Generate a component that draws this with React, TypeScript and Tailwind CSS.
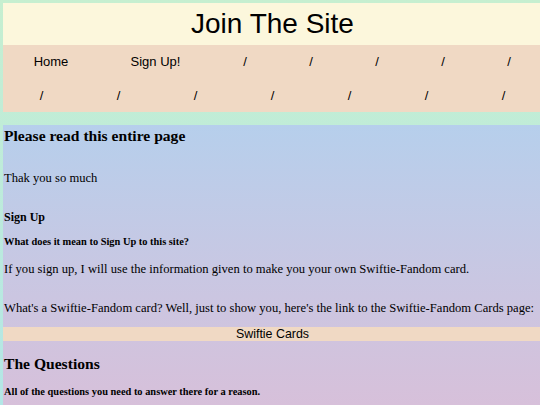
import React from "react";

const serif = { fontFamily: '"Liberation Serif", "Times New Roman", serif' };
const sans = { fontFamily: '"Liberation Sans", Arial, sans-serif' };

export default function App() {
  const row1: [string, number][] = [
    ["Home", 96],
    ["Sign Up!", 113],
    ["/", 66],
    ["/", 66],
    ["/", 66],
    ["/", 66],
    ["/", 66],
  ];
  return (
    <div className="min-h-[405px] w-[540px] overflow-hidden bg-gradient-to-b from-[#c6efd0] to-[#b3e6e6] pl-[3px] pt-[3px]">
      <div className="w-[539px]">
        <div
          className="flex h-[42px] items-center justify-center bg-[#fcf7dc] text-[28px] text-black"
          style={sans}
        >
          Join The Site
        </div>
        <div className="h-[67px] bg-[#f0d9c4] text-[13px] text-black" style={sans}>
          <div className="flex h-[34px] items-center">
            {row1.map(([t, w], i) => (
              <div key={i} className="text-center" style={{ width: w }}>
                {t}
              </div>
            ))}
          </div>
          <div className="grid h-[33px] grid-cols-7 items-center">
            {Array.from({ length: 7 }).map((_, i) => (
              <div key={i} className="text-center">
                /
              </div>
            ))}
          </div>
        </div>
        <div className="h-[13px]" />
        <div
          className="min-h-[280px] bg-gradient-to-b from-[#b6cfec] to-[#d7c0da] pl-[1px] pt-[1px] text-black"
          style={serif}
        >
          <div className="h-[20px] text-[15.6px] font-bold leading-[20px]">
            Please read this entire page
          </div>
          <div className="mt-[22px] h-[20px] text-[12.6px] leading-[20px]">Thak you so much</div>
          <div className="mt-[19px] h-[20px] text-[12px] font-bold leading-[20px]">Sign Up</div>
          <div className="mt-[5px] h-[20px] text-[10.4px] font-bold leading-[20px]">
            What does it mean to Sign Up to this site?
          </div>
          <div className="mt-[7px] h-[20px] text-[12.6px] leading-[20px]">
            If you sign up, I will use the information given to make you your own Swiftie-Fandom card.
          </div>
          <div className="mt-[19px] h-[20px] whitespace-nowrap text-[12.6px] leading-[20px]">
            What's a Swiftie-Fandom card? Well, just to show you, here's the link to the Swiftie-Fandom Cards page:
          </div>
          <div
            className="-ml-[1px] mt-[9px] flex h-[14px] items-center justify-center bg-[#f0d9c4] text-[12.4px]"
            style={sans}
          >
            Swiftie Cards
          </div>
          <div className="mt-[13px] h-[20px] text-[15.6px] font-bold leading-[20px]">The Questions</div>
          <div className="mt-[8px] h-[20px] text-[10.4px] font-bold leading-[20px]">
            All of the questions you need to answer there for a reason.
          </div>
        </div>
      </div>
    </div>
  );
}
